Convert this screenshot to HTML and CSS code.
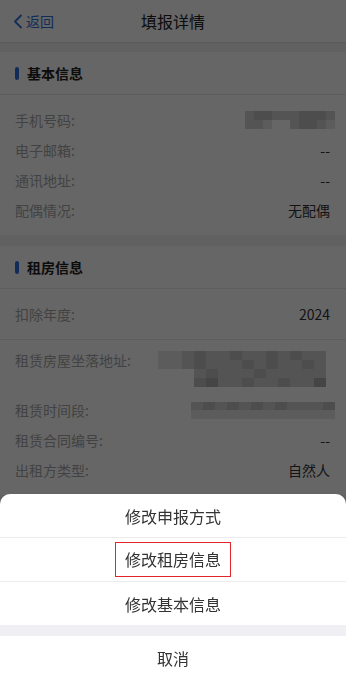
FILE: index.html
```html
<!DOCTYPE html>
<html lang="zh-CN">
<head>
    <meta charset="UTF-8">
    <meta name="viewport" content="width=device-width, initial-scale=1.0">
    <title>填报详情</title>
    <link rel="stylesheet" href="styles.css">
</head>
<body>
    <div class="nav-bar">
        <a class="back-link" href="#">
            <svg class="back-icon" width="10" height="15" viewBox="0 0 10 15"><path d="M8 1.5L2 7.5L8 13.5" fill="none" stroke="currentColor" stroke-width="1.8" stroke-linecap="round" stroke-linejoin="round"/></svg>
            <span>返回</span>
        </a>
        <h1 class="nav-title">填报详情</h1>
    </div>

    <!-- 基本信息 -->
    <div class="section">
        <div class="section-head"><span class="mark"></span>基本信息</div>
        <div class="info-block">
            <div class="info-row">
                <span class="label">手机号码:</span>
                <div class="mosaic mosaic-phone">
                    <i class="s2"></i><i class="s3"></i><i class="s3"></i><i class="s2"></i><i class="s2"></i><i class="s2"></i><i class="s3"></i><i class="s3"></i><i class="s3"></i><i class="s2"></i>
                    <i class="s2"></i><i class="s2"></i><i class="s1"></i><i class="s0"></i><i class="s0"></i><i class="s2"></i><i class="s3"></i><i class="s3"></i><i class="s2"></i><i class="s1"></i>
                </div>
            </div>
            <div class="info-row">
                <span class="label">电子邮箱:</span>
                <span class="value">--</span>
            </div>
            <div class="info-row">
                <span class="label">通讯地址:</span>
                <span class="value">--</span>
            </div>
            <div class="info-row">
                <span class="label">配偶情况:</span>
                <span class="value">无配偶</span>
            </div>
        </div>
    </div>

    <!-- 租房信息 -->
    <div class="section">
        <div class="section-head"><span class="mark"></span>租房信息</div>
        <div class="info-block bordered">
            <div class="info-row">
                <span class="label">扣除年度:</span>
                <span class="value">2024</span>
            </div>
        </div>
        <div class="info-block">
            <div class="info-row tall">
                <span class="label">租赁房屋坐落地址:</span>
                <div class="mosaic mosaic-addr">
                    <i class="s1"></i><i class="s1"></i><i class="s2"></i><i class="s3"></i><i class="s2"></i><i class="s2"></i><i class="s3"></i><i class="s2"></i><i class="s2"></i><i class="s3"></i><i class="s2"></i><i class="s3"></i><i class="s2"></i><i class="s2"></i>
                    <i class="s1"></i><i class="s1"></i><i class="s2"></i><i class="s3"></i><i class="s2"></i><i class="s2"></i><i class="s2"></i><i class="s3"></i><i class="s2"></i><i class="s3"></i><i class="s2"></i><i class="s2"></i><i class="s3"></i><i class="s2"></i>
                    <i class="s0"></i><i class="s0"></i><i class="s0"></i><i class="s2"></i><i class="s3"></i><i class="s2"></i><i class="s2"></i><i class="s2"></i><i class="s3"></i><i class="s2"></i><i class="s2"></i><i class="s2"></i><i class="s2"></i><i class="s2"></i>
                    <i class="s0"></i><i class="s0"></i><i class="s0"></i><i class="s3"></i><i class="s4"></i><i class="s2"></i><i class="s2"></i><i class="s3"></i><i class="s2"></i><i class="s2"></i><i class="s3"></i><i class="s2"></i><i class="s2"></i><i class="s4"></i>
                </div>
            </div>
            <div class="info-row">
                <span class="label">租赁时间段:</span>
                <div class="mosaic mosaic-time">
                    <i class="s2"></i><i class="s3"></i><i class="s2"></i><i class="s3"></i><i class="s2"></i><i class="s3"></i><i class="s2"></i><i class="s3"></i><i class="s2"></i><i class="s2"></i><i class="s2"></i><i class="s3"></i>
                    <i class="s1"></i><i class="s1"></i><i class="s1"></i><i class="s1"></i><i class="s1"></i><i class="s1"></i><i class="s1"></i><i class="s1"></i><i class="s1"></i><i class="s1"></i><i class="s1"></i><i class="s1"></i>
                </div>
            </div>
            <div class="info-row">
                <span class="label">租赁合同编号:</span>
                <span class="value">--</span>
            </div>
            <div class="info-row">
                <span class="label">出租方类型:</span>
                <span class="value">自然人</span>
            </div>
        </div>
    </div>

    <div class="mask"></div>

    <div class="action-sheet">
        <div class="sheet-item">修改申报方式</div>
        <div class="sheet-item"><span class="highlight">修改租房信息</span></div>
        <div class="sheet-item">修改基本信息</div>
        <div class="sheet-gap"></div>
        <div class="sheet-item cancel">取消</div>
    </div>
</body>
</html>
```

FILE: styles.css
```css
body {
    margin: 0;
    font-family: "Noto Sans CJK SC", "Noto Sans", sans-serif;
    background: #f2f2f4;
    color: #333;
    height: 693px;
    overflow: hidden;
}
.nav-bar {
    height: 42px;
    background: #ffffff;
    border-bottom: 1px solid #e3e3e3;
    display: flex;
    align-items: center;
    justify-content: center;
    position: relative;
}
.back-link {
    position: absolute;
    left: 13px;
    top: 0;
    height: 42px;
    display: flex;
    align-items: center;
    gap: 3px;
    color: #2f6fe0;
    text-decoration: none;
    font-size: 14px;
}
.nav-title {
    margin: 0;
    font-size: 16px;
    font-weight: 400;
    color: #222;
}
.section {
    margin-top: 9px;
    background: #ffffff;
}
.section + .section {
    margin-top: 11px;
}
.section-head {
    height: 42px;
    display: flex;
    align-items: center;
    padding-left: 15px;
    font-size: 14px;
    font-weight: 600;
    color: #222;
    border-bottom: 1px solid #e8e8e8;
}
.mark {
    width: 4px;
    height: 13px;
    border-radius: 2px;
    background: #2f6fe0;
    margin-right: 8px;
}
.info-block {
    padding: 10px 16px 10px 15px;
}
.info-block.bordered {
    border-bottom: 1px solid #e8e8e8;
}
.info-row {
    height: 30px;
    display: flex;
    align-items: center;
    justify-content: space-between;
    font-size: 14px;
}
.info-row.tall {
    height: 45px;
    align-items: flex-start;
}
.info-row.tall .label {
    line-height: 20px;
}
.label {
    color: #a6a6a6;
}
.value {
    color: #333;
}
.mosaic {
    display: grid;
}
.mosaic i {
    display: block;
}
.mosaic-phone {
    grid-template-columns: repeat(10, 9px);
    grid-auto-rows: 9px;
    margin-right: -5px;
}
.mosaic-addr {
    grid-template-columns: repeat(14, 12px);
    grid-auto-rows: 9px;
    margin-top: 1px;
    margin-right: 4px;
}
.mosaic-time {
    grid-template-columns: repeat(12, 12px);
    grid-auto-rows: 8.5px;
    margin-right: -5px;
}
.s0 { background: transparent; }
.s1 { background: #e6e6e6; }
.s2 { background: #d2d2d2; }
.s3 { background: #c0c0c0; }
.s4 { background: #acacac; }
.mask {
    position: fixed;
    inset: 0;
    background: rgba(0, 0, 0, 0.6);
}
.action-sheet {
    position: fixed;
    left: 0;
    right: 0;
    bottom: 0;
    background: #ffffff;
    border-radius: 10px 10px 0 0;
    overflow: hidden;
}
.sheet-item {
    height: 43px;
    display: flex;
    align-items: center;
    justify-content: center;
    font-size: 16px;
    color: #333;
    border-bottom: 1px solid #ececec;
}
.sheet-item:nth-child(3) {
    border-bottom: none;
}
.sheet-item.cancel {
    height: 44px;
    padding-bottom: 13px;
    border-bottom: none;
}
.sheet-gap {
    height: 11px;
    background: #efeff4;
}
.highlight {
    display: inline-block;
    padding: 7px 9px;
    line-height: 19px;
    border: 1.5px solid #e3262b;
}
```
